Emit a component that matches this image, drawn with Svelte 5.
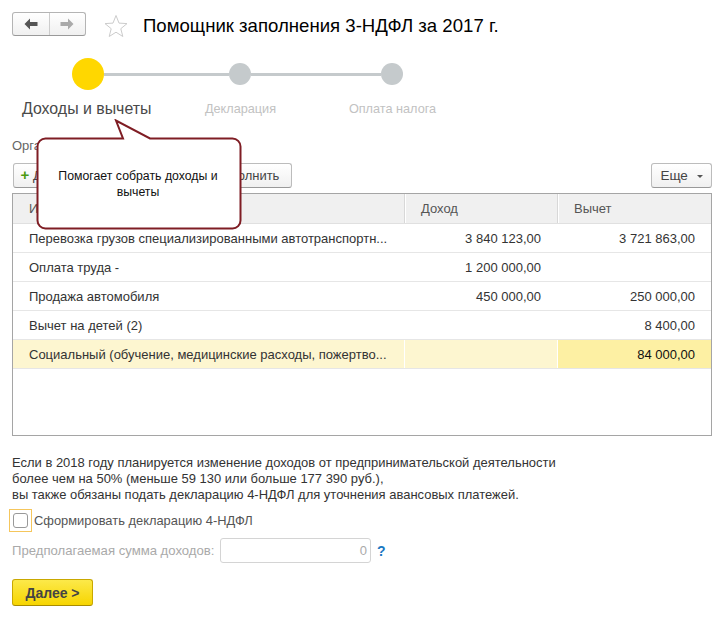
<script>
    let rows = [
        { name: "Перевозка грузов специализированными автотранспортн...", income: "3 840 123,00", deduct: "3 721 863,00" },
        { name: "Оплата труда -", income: "1 200 000,00", deduct: "" },
        { name: "Продажа автомобиля", income: "450 000,00", deduct: "250 000,00" },
        { name: "Вычет на детей (2)", income: "", deduct: "8 400,00" },
        { name: "Социальный (обучение, медицинские расходы, пожертво...", income: "", deduct: "84 000,00", active: true },
    ];
</script>

<div class="page">
    <header class="head">
        <div class="nav">
            <button class="nav-btn" aria-label="Назад">
                <svg width="14" height="12" viewBox="0 0 14 12"><path d="M6 .5 .5 6 6 11.500V8h7.500V4H6z" fill="#555" /></svg>
            </button>
            <button class="nav-btn" aria-label="Вперед">
                <svg width="14" height="12" viewBox="0 0 14 12"><path d="M8 .5 13.500 6 8 11.500V8H.5V4H8z" fill="#aaa" /></svg>
            </button>
        </div>
        <svg class="star" width="24" height="24" viewBox="0 0 24 24">
            <path d="M12 1.500l3 7.600 8 .5-6.200 5.100 2 7.800L12 18.200 5.200 22.500l2-7.800L1 9.600l8-.5z" fill="#fff" stroke="#ccc" />
        </svg>
        <h1>Помощник заполнения 3-НДФЛ за 2017 г.</h1>
    </header>

    <div class="track">
        <span class="dot current"></span>
        <span class="line first"></span>
        <span class="dot"></span>
        <span class="line"></span>
        <span class="dot"></span>
    </div>
    <div class="labels">
        <span class="label current">Доходы и вычеты</span>
        <span class="label">Декларация</span>
        <span class="label">Оплата налога</span>
    </div>

    <div class="org">Организация: <a href="#org">Ромашкин С. А. ИП</a></div>

    <div class="toolbar">
        <button class="btn"><span class="plus">+</span> Добавить</button>
        <button class="btn">Изменить</button>
        <button class="btn">Заполнить</button>
        <button class="btn more">Еще <i class="caret"></i></button>
    </div>

    <div class="table">
        <div class="row header">
            <div class="cell">Информация</div>
            <div class="cell">Доход</div>
            <div class="cell">Вычет</div>
        </div>
        {#each rows as row}
            <div class="row" class:active={row.active}>
                <div class="cell">{row.name}</div>
                <div class="cell num">{row.income}</div>
                <div class="cell num last">{row.deduct}</div>
            </div>
        {/each}
    </div>

    <p class="note">
        Если в 2018 году планируется изменение доходов от предпринимательской деятельности<br />
        более чем на 50% (меньше 59 130 или больше 177 390 руб.),<br />
        вы также обязаны подать декларацию 4-НДФЛ для уточнения авансовых платежей.
    </p>

    <label class="check">
        <span class="focus"><span class="box"></span></span>
        Сформировать декларацию 4-НДФЛ
    </label>

    <div class="sum">
        <span class="sum-label">Предполагаемая сумма доходов:</span>
        <span class="input">0</span>
        <span class="help">?</span>
    </div>

    <button class="next">Далее &gt;</button>

    <div class="callout">
        <svg width="208" height="112" viewBox="0 0 208 112">
            <path
                d="M10.500 19.500H88L81 1.500 115 19.500H197.500a8 8 0 0 1 8 8V101.500a8 8 0 0 1-8 8H10.500a8 8 0 0 1-8-8V27.500a8 8 0 0 1 8-8z"
                fill="#fff"
                stroke="#7f1d24"
                stroke-width="2"
            />
        </svg>
        <p>Помогает собрать доходы и вычеты</p>
    </div>
</div>

<style>
    :global(body) {
        margin: 0;
        background: #fff;
    }
    .page {
        position: relative;
        box-sizing: border-box;
        width: 725px;
        height: 620px;
        padding: 12px 13px 0 12px;
        font-family: "Liberation Sans", Arial, sans-serif;
        font-size: 13px;
        color: #333;
        overflow: hidden;
    }
    button {
        font: inherit;
        color: inherit;
        cursor: pointer;
    }
    .head {
        display: flex;
        align-items: flex-start;
        height: 26px;
    }
    .nav {
        display: flex;
        flex: none;
        width: 74px;
        height: 24px;
        box-sizing: border-box;
        border: 1px solid #b4b4b4;
        border-bottom-color: #999;
        border-radius: 3px;
        background: linear-gradient(#fff, #f0f0f0);
    }
    .nav-btn {
        flex: 1;
        padding: 0;
        border: 0;
        background: none;
        display: flex;
        align-items: center;
        justify-content: center;
    }
    .nav-btn + .nav-btn {
        border-left: 1px solid #ccc;
    }
    .star {
        flex: none;
        margin: 2px 0 0 18px;
    }
    h1 {
        margin: 1px 0 0 15px;
        font-size: 18.6px;
        font-weight: 400;
        color: #000;
        line-height: 26px;
        white-space: nowrap;
    }
    .track {
        display: flex;
        align-items: center;
        margin: 20px 0 0 60px;
        width: 331px;
    }
    .dot {
        flex: none;
        width: 22px;
        height: 22px;
        border-radius: 50%;
        background: #c5cacc;
    }
    .dot.current {
        width: 32px;
        height: 32px;
        background: #ffd700;
    }
    .line {
        flex: 1;
        height: 3px;
        background: #c5cacc;
    }
    .line.first {
        flex: none;
        width: 125px;
    }
    .labels {
        display: grid;
        grid-template-columns: repeat(3, 152px);
        margin-top: 7px;
        height: 24px;
        align-items: center;
    }
    .label {
        text-align: center;
        font-size: 12.700px;
        color: #c2c2c2;
        padding-left: 1px;
    }
    .label.current {
        font-size: 15.900px;
        color: #4a4a4a;
        white-space: nowrap;
        text-align: left;
        padding-left: 10px;
    }
    .org {
        margin-top: 17px;
        height: 15px;
        line-height: 15px;
        color: #666;
    }
    .org a {
        color: #4a7fb0;
    }
    .toolbar {
        display: flex;
        gap: 10px;
        margin: 10px 0 0 1px;
        height: 25px;
    }
    .btn {
        box-sizing: border-box;
        width: 85px;
        height: 25px;
        padding: 0;
        border: 1px solid #bcbcbc;
        border-bottom-color: #999;
        border-radius: 3px;
        background: linear-gradient(#fff, #f0f0f0);
        color: #444;
    }
    .btn:nth-child(3) {
        width: 89px;
    }
    .plus {
        color: #4a9a10;
        font-weight: 700;
        font-size: 15px;
        line-height: 12px;
    }
    .more {
        width: 61px;
        margin-left: auto;
        font-size: 13.500px;
    }
    .caret {
        display: inline-block;
        margin-left: 5px;
        vertical-align: 2px;
        border: 3px solid transparent;
        border-top-color: #555;
        border-bottom: 0;
    }
    .table {
        box-sizing: border-box;
        height: 243px;
        margin-top: 5px;
        border: 1px solid #a5a5a5;
    }
    .row {
        display: grid;
        grid-template-columns: 391px 153px 154px;
        height: 29px;
        box-sizing: border-box;
        border-bottom: 1px solid #e6e6e6;
        align-items: stretch;
    }
    .cell {
        display: flex;
        align-items: center;
        padding: 1px 16px 0;
        white-space: nowrap;
        overflow: hidden;
    }
    .num {
        justify-content: flex-end;
    }
    .header {
        height: 30px;
        background: #f0f0f0;
        border-bottom: 1px solid #e0e0e0;
        color: #555;
    }
    .header .cell {
        padding-top: 0;
    }
    .header .cell + .cell {
        border-left: 1px solid #d8d8d8;
        box-shadow: inset 1px 0 0 #fff;
    }
    .active {
        background: #fdf6d0;
    }
    .active .cell + .cell {
        border-left: 1px solid #fff;
    }
    .active .last {
        background: #fdf0a3;
        color: #111;
    }
    .note {
        margin: 19px 0 0;
        line-height: 16px;
        color: #333;
        font-size: 12.980px;
    }
    .check {
        display: flex;
        align-items: center;
        gap: 2px;
        margin: 6px 0 0 -3px;
        height: 23px;
        color: #555;
        font-size: 12.900px;
    }
    .focus {
        box-sizing: border-box;
        width: 23px;
        height: 23px;
        padding: 3px;
        border: 1px solid #f5c65c;
    }
    .box {
        display: block;
        box-sizing: border-box;
        width: 15px;
        height: 15px;
        border: 1px solid #999;
        border-radius: 3px;
    }
    .sum {
        display: flex;
        align-items: center;
        margin-top: 6px;
        height: 25px;
    }
    .sum-label {
        flex: none;
        width: 208px;
        color: #aaa;
        white-space: nowrap;
        font-size: 13.130px;
    }
    .input {
        box-sizing: border-box;
        width: 151px;
        height: 25px;
        line-height: 23px;
        padding-right: 3px;
        text-align: right;
        border: 1px solid #d4d4d4;
        border-radius: 3px;
        color: #aaa;
    }
    .help {
        margin-left: 6px;
        color: #1a78c2;
        font-weight: 700;
        font-size: 14px;
    }
    .next {
        display: block;
        box-sizing: border-box;
        width: 81px;
        height: 27px;
        margin-top: 16px;
        padding: 0;
        border: 1px solid #c9a800;
        border-bottom-color: #a88c00;
        border-radius: 3px;
        background: linear-gradient(#fce94a, #f7d500);
        font-weight: 700;
        font-size: 14px;
        color: #444;
    }
    .callout {
        position: absolute;
        left: 35px;
        top: 119px;
        width: 208px;
        height: 112px;
    }
    .callout svg {
        display: block;
    }
    .callout p {
        position: absolute;
        left: 11px;
        right: 13px;
        top: 50px;
        margin: 0;
        text-align: center;
        font-size: 12.300px;
        line-height: 15.500px;
        color: #111;
    }
</style>
